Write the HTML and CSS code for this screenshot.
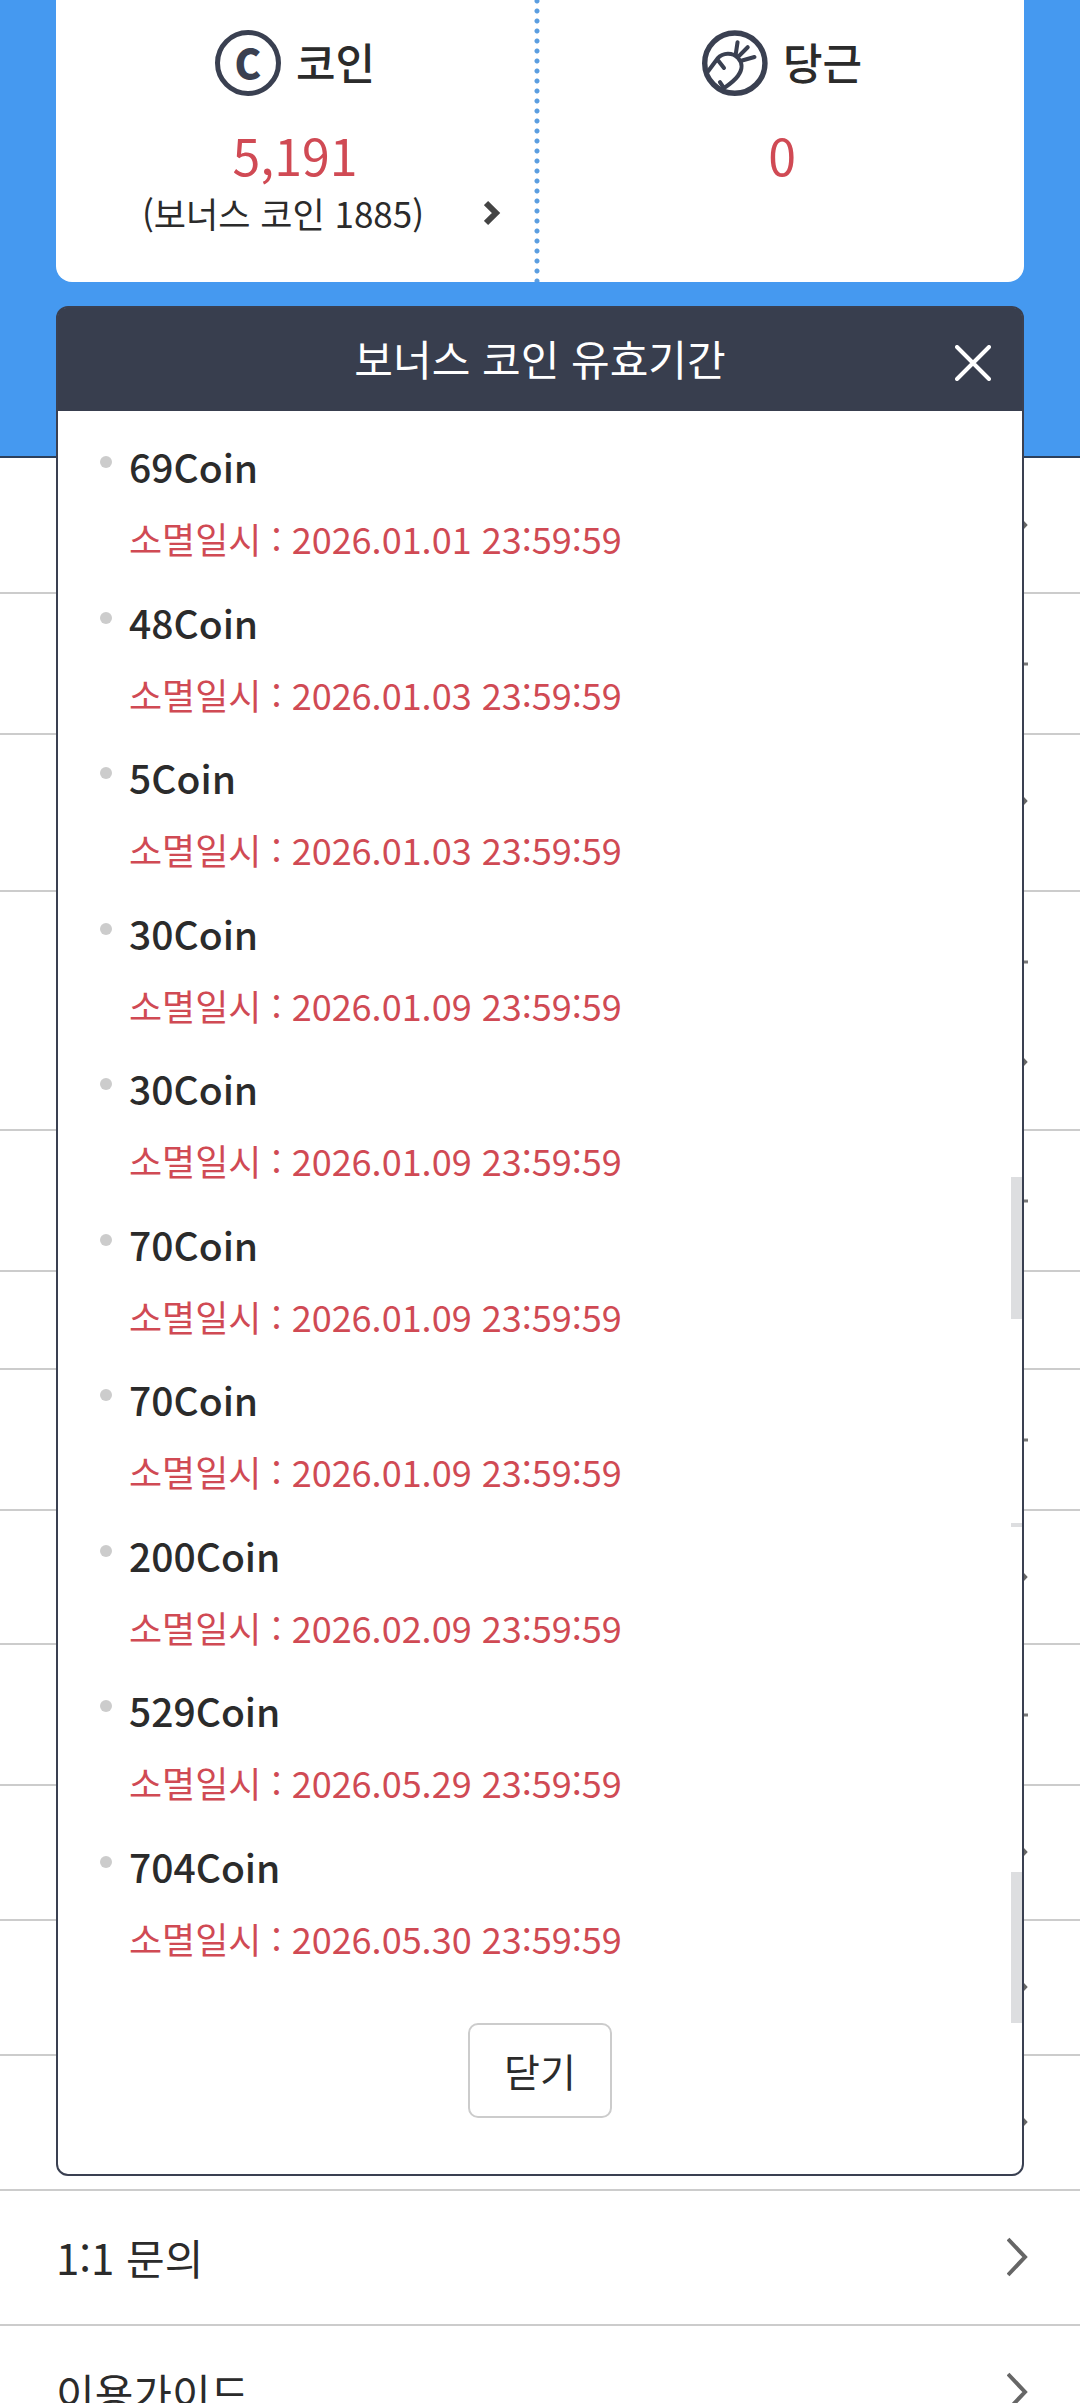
FILE: index.html
```html
<!DOCTYPE html>
<html lang="ko">
<head>
<meta charset="utf-8">
<meta name="viewport" content="width=device-width, initial-scale=1">
<title>보너스 코인 유효기간</title>
<link rel="stylesheet" href="styles.css">
</head>
<body>
<svg class="sprite" aria-hidden="true">
  <symbol id="chevron" viewBox="0 0 21 40"><path d="M1 2 L18 20 L1 38" fill="none" stroke="#666" stroke-width="4"/></symbol>
  <symbol id="minus" viewBox="0 0 26 40"><path d="M0 20 H26" stroke="#777" stroke-width="3"/></symbol>
</svg>
<main class="page">
  <header class="hero">
    <div class="wallet">
      <section class="balance">
        <h2 class="balance-title"><span class="coin-icon">C</span>코인</h2>
        <strong class="amount">5,191</strong>
        <a class="bonus" href="#bonus"><span>(보너스 코인 1885)</span>
          <svg class="bonus-arrow" viewBox="0 0 17 26"><path d="M2 3 L12 13 L2 23" fill="none" stroke="#444" stroke-width="6"/></svg>
        </a>
      </section>
      <section class="balance">
        <h2 class="balance-title">
          <svg class="carrot-icon" viewBox="0 0 195 195" fill="none" stroke="#3a4051" stroke-width="12" stroke-linecap="round" stroke-linejoin="round">
            <circle cx="97" cy="98" r="89" stroke-width="16"/>
            <path d="M18 122 L46 84 C62 66 90 66 106 82 C122 100 120 116 106 136 C96 150 82 160 65 172 L53 154 M46 88 L65 112 M99 76 L105 36 M106 80 L135 51 M116 91 L155 80"/>
          </svg>당근</h2>
        <strong class="amount">0</strong>
      </section>
    </div>
  </header>

  <ul class="menu">
    <li class="row"><svg class="chevron"><use href="#chevron"/></svg></li>
    <li class="row row-fold"><svg class="minus"><use href="#minus"/></svg></li>
    <li class="row row-end"><svg class="chevron"><use href="#chevron"/></svg></li>
    <li class="row row-fold row-open"><svg class="minus"><use href="#minus"/></svg></li>
    <li class="row row-sub"><svg class="chevron"><use href="#chevron"/></svg></li>
    <li class="row row-fold"><svg class="minus"><use href="#minus"/></svg></li>
    <li class="row row-short"></li>
    <li class="row row-fold"><svg class="minus"><use href="#minus"/></svg></li>
    <li class="row row-tight"><svg class="chevron"><use href="#chevron"/></svg></li>
    <li class="row row-fold"><svg class="minus"><use href="#minus"/></svg></li>
    <li class="row"><svg class="chevron"><use href="#chevron"/></svg></li>
    <li class="row"><svg class="chevron"><use href="#chevron"/></svg></li>
    <li class="row"><svg class="chevron"><use href="#chevron"/></svg></li>
    <li class="row"><a href="#inquiry">1:1 문의<svg class="chevron"><use href="#chevron"/></svg></a></li>
    <li class="row"><a href="#guide">이용가이드<svg class="chevron"><use href="#chevron"/></svg></a></li>
  </ul>

  <section class="popup" id="bonus" role="dialog" aria-labelledby="popup-title">
    <header class="popup-head">
      <h1 id="popup-title">보너스 코인 유효기간</h1>
      <button class="popup-x" type="button">
        <svg viewBox="0 0 36 36"><path d="M2 2 L34 34 M34 2 L2 34" stroke="#fff" stroke-width="4" stroke-linecap="round"/></svg>
      </button>
    </header>
    <ul class="coins">
      <li><b>69Coin</b><span>소멸일시 : 2026.01.01 23:59:59</span></li>
      <li><b>48Coin</b><span>소멸일시 : 2026.01.03 23:59:59</span></li>
      <li><b>5Coin</b><span>소멸일시 : 2026.01.03 23:59:59</span></li>
      <li><b>30Coin</b><span>소멸일시 : 2026.01.09 23:59:59</span></li>
      <li><b>30Coin</b><span>소멸일시 : 2026.01.09 23:59:59</span></li>
      <li><b>70Coin</b><span>소멸일시 : 2026.01.09 23:59:59</span></li>
      <li><b>70Coin</b><span>소멸일시 : 2026.01.09 23:59:59</span></li>
      <li><b>200Coin</b><span>소멸일시 : 2026.02.09 23:59:59</span></li>
      <li><b>529Coin</b><span>소멸일시 : 2026.05.29 23:59:59</span></li>
      <li><b>704Coin</b><span>소멸일시 : 2026.05.30 23:59:59</span></li>
    </ul>
    <button class="close" type="button">닫기</button>
    <i class="bar bar-a"></i>
    <i class="bar bar-b"></i>
    <i class="bar bar-c"></i>
  </section>
</main>
</body>
</html>
```
FILE: styles.css
```css
* { box-sizing: border-box; }

body {
  margin: 0;
  background: #fff;
  color: #2b2b2b;
  font-family: "Noto Sans CJK KR", sans-serif;
  font-size: 42px;
}

h1, h2, ul { margin: 0; padding: 0; }
ul { list-style: none; }
a { color: inherit; text-decoration: none; }
svg { display: block; flex: none; }
button { font: inherit; color: inherit; padding: 0; cursor: pointer; }
.sprite { position: absolute; width: 0; height: 0; }

.page {
  position: relative;
  height: 100vh;
  overflow: hidden;
}

/* Balance card */
.hero {
  padding: 0 56px 174px;
  background: #4599f0;
  border-bottom: 2px solid #2c405c;
}
.wallet {
  display: grid;
  grid-template-columns: 1fr 1fr;
  height: 282px;
  background: #fff;
  border-radius: 0 0 16px 16px;
}
.balance {
  display: flex;
  flex-direction: column;
  align-items: center;
  padding-top: 30px;
}
.balance:first-child {
  padding-right: 6px;
  background: radial-gradient(circle, #5a9de0 2px, transparent 3px) right 0 top -4px / 6px 10px repeat-y;
}
.balance-title {
  display: flex;
  align-items: flex-start;
  gap: 15px;
  height: 66px;
  font-size: 43px;
  font-weight: 500;
  line-height: 62px;
}
.coin-icon {
  width: 66px;
  height: 66px;
  border: 5px solid #3a4051;
  border-radius: 50%;
  color: #3a4051;
  font-size: 40px;
  font-weight: 900;
  line-height: 54px;
  text-align: center;
}
.carrot-icon { width: 66px; height: 66px; }
.amount {
  color: #d04a54;
  font-size: 50px;
  font-weight: 400;
  line-height: 60px;
  margin-top: 28px;
}
.bonus {
  display: flex;
  align-items: center;
  align-self: stretch;
  justify-content: flex-end;
  gap: 60px;
  margin-top: 2px;
  padding-right: 33px;
  font-size: 35px;
  line-height: 54px;
}
.bonus-arrow { width: 17px; height: 26px; }

/* Menu behind the popup */
.menu { padding-top: 1px; }
.row {
  min-height: 135px;
  padding: 0 52px 0 56px;
  border-bottom: 2px solid #ccc;
  display: flex;
  justify-content: flex-end;
  line-height: 131px;
}
.row a { flex: 1; display: flex; justify-content: space-between; }
.row .chevron { width: 21px; height: 40px; margin-top: 46px; }
.row .minus { width: 26px; height: 40px; margin-top: 50px; }
.row-fold { min-height: 141px; }
.row-end { min-height: 157px; }
.row-open { min-height: 104px; border-bottom: 0; }
.row-short { min-height: 98px; }
.row-tight { min-height: 134px; }

/* Expiry popup */
.popup {
  position: absolute;
  top: 306px;
  left: 56px;
  right: 56px;
  padding-bottom: 56px;
  background: #fff;
  border: 2px solid #3a4051;
  border-radius: 12px;
}
.popup-head {
  display: grid;
  grid-template-columns: 1fr auto 1fr;
  align-items: center;
  height: 103px;
  padding: 0 31px;
  background: #383e4e;
  border-radius: 8px 8px 0 0;
  color: #fff;
}
.popup-head h1 {
  grid-column: 2;
  padding-bottom: 3px;
  font-size: 42px;
  font-weight: 400;
  line-height: 62px;
}
.popup-x {
  justify-self: end;
  width: 36px;
  height: 42px;
  padding-top: 6px;
  border: 0;
  background: none;
}
.coins { padding: 19px 42px 0; }
.coins li {
  display: grid;
  grid-template-columns: 12px 1fr;
  column-gap: 17px;
  padding-bottom: 12px;
}
.coins li:nth-child(even) { padding-bottom: 11px; }
.coins li::before {
  content: "";
  width: 12px;
  height: 12px;
  margin-top: 26px;
  border-radius: 50%;
  background: #ccc;
}
.coins b {
  font-size: 39px;
  font-weight: 500;
  line-height: 72px;
}
.coins span {
  grid-column: 2;
  color: #d04a54;
  font-size: 36px;
  line-height: 72px;
}
.close {
  display: block;
  width: 144px;
  height: 95px;
  margin: 38px auto 0;
  padding-bottom: 2px;
  border: 2px solid #ccc;
  border-radius: 10px;
  background: #fff;
  font-size: 39px;
}
.bar {
  position: absolute;
  right: 0;
  width: 11px;
  background: #dddee0;
}
.bar-a { top: 869px; height: 142px; }
.bar-b { top: 1215px; height: 4px; }
.bar-c { top: 1564px; height: 151px; }
```
